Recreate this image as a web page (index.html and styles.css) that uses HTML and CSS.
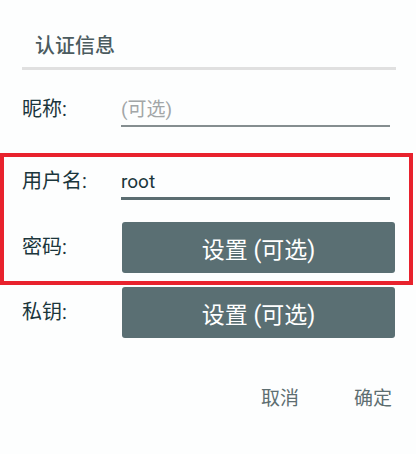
FILE: index.html
```html
<!DOCTYPE html>
<html lang="zh-CN">
<head>
<meta charset="utf-8">
<link rel="stylesheet" href="styles.css">
</head>
<body>
<div class="dialog">
  <div class="title">认证信息</div>
  <div class="divider"></div>
  <div class="row row-nick">
    <div class="label">昵称:</div>
    <div class="field field-thin"><span class="placeholder">(可选)</span></div>
  </div>
  <div class="highlight">
    <div class="row row-user">
      <div class="label">用户名:</div>
      <div class="field field-thick">root</div>
    </div>
    <div class="row row-pass">
      <div class="label">密码:</div>
      <button class="btn">设置 (可选)</button>
    </div>
  </div>
  <div class="row row-key">
    <div class="label">私钥:</div>
    <button class="btn">设置 (可选)</button>
  </div>
  <div class="actions">
    <span class="action">取消</span>
    <span class="action">确定</span>
  </div>
</div>
</body>
</html>
```

FILE: styles.css
```css
* { box-sizing: border-box; }
html, body {
  margin: 0;
  padding: 0;
  background: #fdfefe;
}
body {
  width: 416px;
  height: 454px;
  overflow: hidden;
  font-family: Roboto, "Noto Sans CJK SC", sans-serif;
}
.dialog {
  display: flex;
  flex-direction: column;
}
.title {
  padding: 33px 0 7px 35px;
  font-size: 20px;
  line-height: 27px;
  font-weight: 500;
  color: #4b5b5f;
}
.divider {
  margin-left: 22px;
  width: 374px;
  height: 3px;
  background: #e0e0e0;
}
.row {
  display: grid;
  grid-template-columns: 99px 1fr;
  align-items: center;
  padding-left: 22px;
  padding-right: 21px;
}
.label {
  font-size: 20px;
  line-height: 27px;
  color: #1b363c;
}
.field {
  font-size: 19px;
  line-height: 27px;
  color: #1b363c;
  margin-right: 5px;
}
.field-thin {
  padding-bottom: 2px;
  border-bottom: 2px solid #858e90;
}
.field-thick {
  padding-bottom: 2px;
  border-bottom: 3px solid #5b6d71;
}
.placeholder { color: #a2a6a7; }
.row-nick {
  padding-top: 26px;
  height: 83px;
  align-items: start;
}
.highlight {
  width: 413px;
  border: 4px solid #e8222d;
}
.highlight .row {
  padding-left: 18px;
  padding-right: 14px;
}
.row-user {
  padding-top: 11px;
  align-items: start;
}
.row-pass {
  padding-top: 22px;
  padding-bottom: 8px;
}
.btn {
  margin: 0 0 0 1px;
  height: 51px;
  border: none;
  border-radius: 3px;
  background: #5a6f73;
  color: #ffffff;
  font-family: Roboto, "Noto Sans CJK SC", sans-serif;
  font-size: 23px;
  padding: 0;
}
.row-key {
  padding-top: 2px;
}
.actions {
  display: flex;
  justify-content: flex-end;
  gap: 55px;
  margin-top: 47px;
  padding-right: 24px;
}
.action {
  font-size: 19px;
  line-height: 27px;
  color: #5d6e71;
}
```
